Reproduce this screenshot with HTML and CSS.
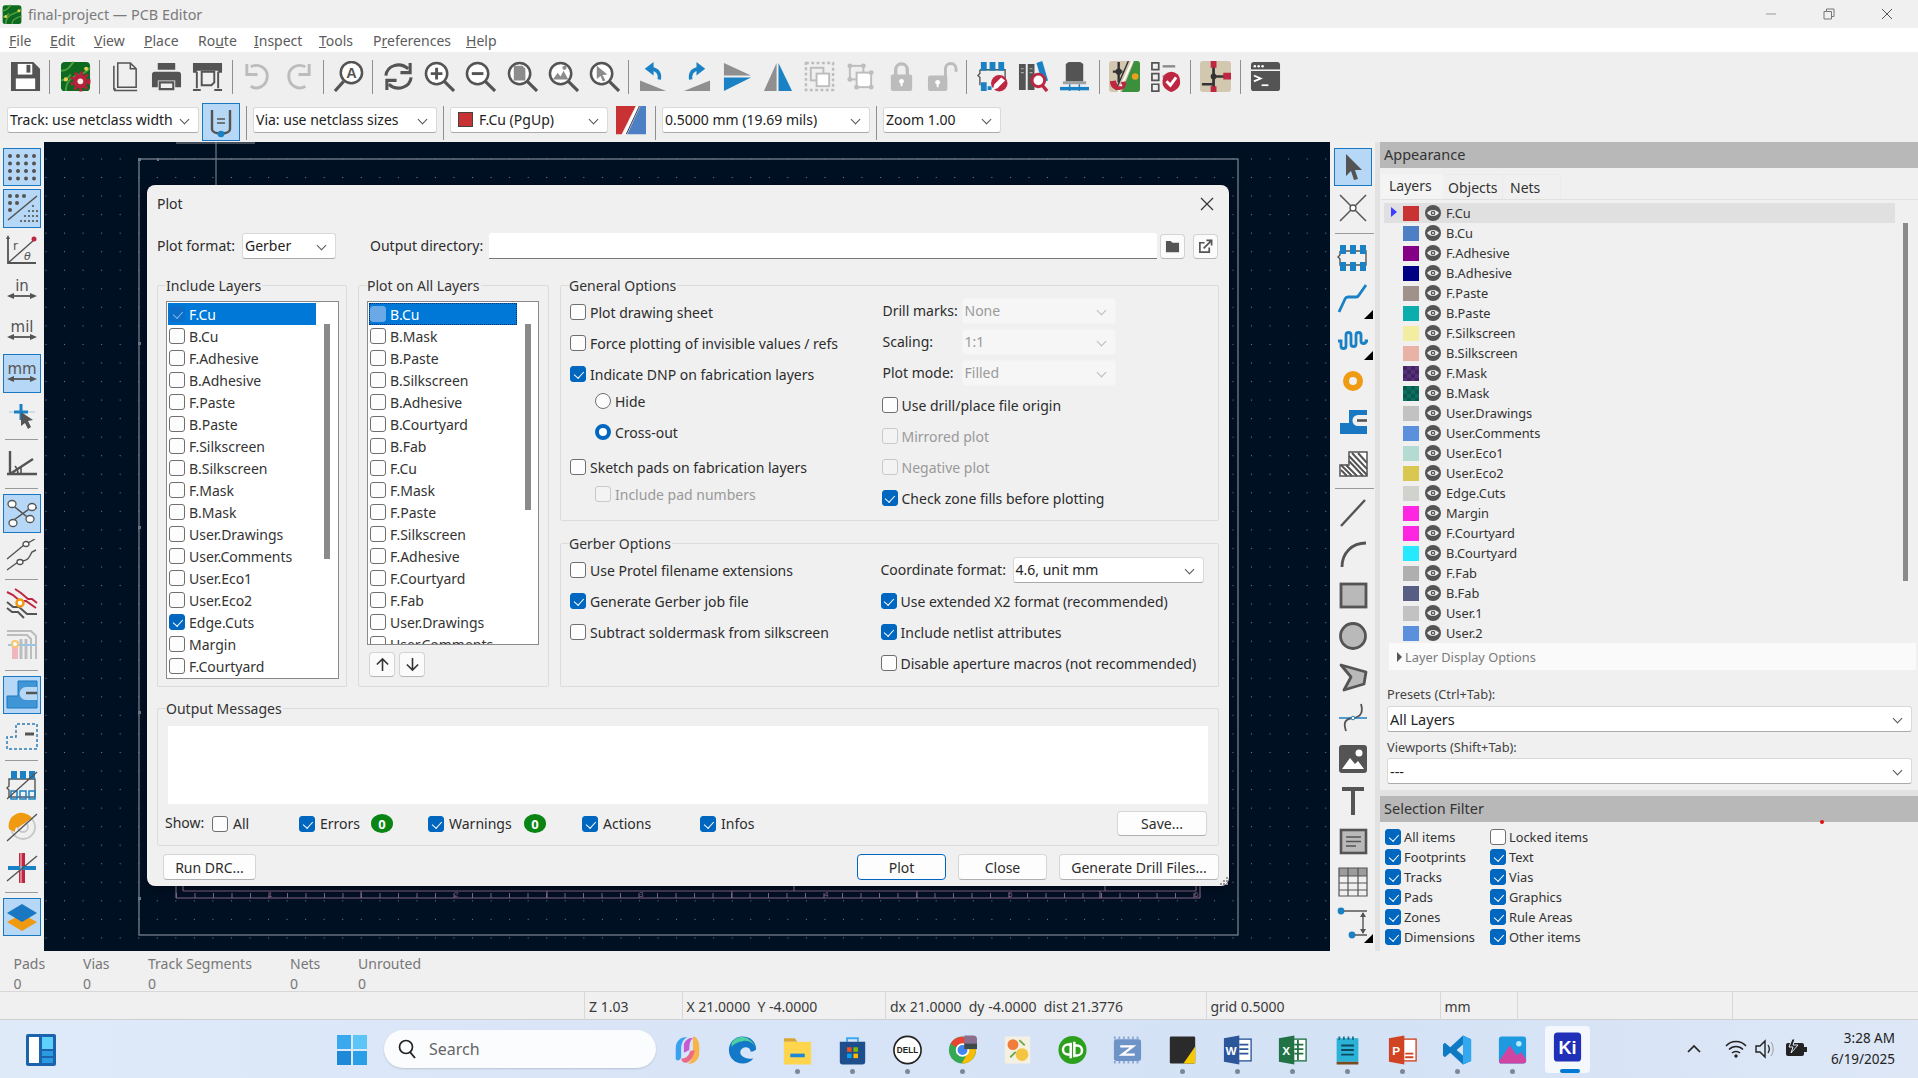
FILE: index.html
```html
<!DOCTYPE html>
<html lang="en">
<head>
<meta charset="utf-8">
<title>final-project — PCB Editor</title>
<link rel="stylesheet" href="styles.css">
</head>
<body>
<svg class="sprite" aria-hidden="true"><defs>
<symbol id="save" viewBox="0 0 32 32"><path fill="#545454" d="M1 1h23l7 7v23H1z"/><path fill="#fff" d="M8 3h15v11H8z"/><path fill="#545454" d="M17 4h4v8h-4z"/><path fill="#fff" d="M6 18h20v11H6z"/></symbol>
<symbol id="bsetup" viewBox="0 0 32 32"><rect x="1" y="1" width="30" height="30" rx="4" fill="#0d6a20"/><path d="M1 10c8 0 9-5 13-9M6 31c0-9 4-14 14-17s9-6 11-7M1 20c6 0 8-3 10-6" fill="none" stroke="#4e9f3d" stroke-width="2"/><circle cx="6" cy="19" r="2.200" fill="#e8cf52"/><circle cx="27" cy="8" r="2" fill="#e8cf52"/><circle cx="21" cy="21" r="9" fill="none" stroke="#b81f3c" stroke-width="3" stroke-dasharray="3 3"/><circle cx="21" cy="21" r="7.500" fill="#b81f3c"/><circle cx="21" cy="21" r="3" fill="#f4efe0"/></symbol>
<symbol id="page" viewBox="0 0 32 32"><path fill="none" stroke="#545454" stroke-width="1.600" d="M8 2h13l6 6v19H8zM21 2v6h6M4 5v24h2M4 30.500h24"/></symbol>
<symbol id="print" viewBox="0 0 32 32"><path fill="#545454" d="M7 2h18v7H7zM4 11h24a3 3 0 0 1 3 3v13h-6v-7H7v7H1V14a3 3 0 0 1 3-3z"/><path fill="none" stroke="#545454" stroke-width="2.200" d="M9 22h14v7H9z"/></symbol>
<symbol id="plot" viewBox="0 0 32 32"><path fill="#545454" d="M1 2h30v10h-4v-2H5v2H1z"/><path fill="none" stroke="#545454" stroke-width="2" d="M5 11v17M27 11v17M1 30h8M23 30h8M10 11h13v11l-3 3H10z"/></symbol>
<symbol id="undo" viewBox="0 0 32 32"><path d="M9 6c8-4 18 1 17 11s-11 13-17 9" fill="none" stroke="#bcbcbc" stroke-width="3"/><path d="M5 3v11h11" fill="none" stroke="#bcbcbc" stroke-width="3"/></symbol>
<symbol id="redo" viewBox="0 0 32 32"><path d="M23 6C15 2 5 7 6 17s11 13 17 9" fill="none" stroke="#bcbcbc" stroke-width="3"/><path d="M27 3v11H16" fill="none" stroke="#bcbcbc" stroke-width="3"/></symbol>
<symbol id="find" viewBox="0 0 32 32"><circle cx="19" cy="12" r="11" fill="#fff" stroke="#545454" stroke-width="2.600"/><path d="M11 21L2 31" stroke="#545454" stroke-width="3.200"/><text x="19" y="18" class="svgb" font-size="15" text-anchor="middle" fill="#545454">A</text></symbol>
<symbol id="refresh" viewBox="0 0 32 32"><path d="M3 15C4 5 17 0 26 8M29 17c-1 10-14 15-23 7" fill="none" stroke="#545454" stroke-width="3.200"/><path d="M28 2v10H18M4 30V20h10" fill="none" stroke="#545454" stroke-width="3.200"/></symbol>
<symbol id="mag" viewBox="0 0 32 32"><circle cx="13" cy="13" r="11" fill="#fff" stroke="#545454" stroke-width="2.600"/><path d="M21 21l10 10" stroke="#545454" stroke-width="3.200"/></symbol>
<symbol id="zin" viewBox="0 0 32 32"><use href="#mag"/><path d="M7 13h12M13 7v12" stroke="#545454" stroke-width="3"/></symbol>
<symbol id="zout" viewBox="0 0 32 32"><use href="#mag"/><path d="M7 13h12" stroke="#545454" stroke-width="3"/></symbol>
<symbol id="zfit" viewBox="0 0 32 32"><use href="#mag"/><path fill="#8c8c8c" d="M7 5h9l3 3v12H7z"/></symbol>
<symbol id="zobj" viewBox="0 0 32 32"><use href="#mag"/><path fill="#8c8c8c" d="M5 19l5-7 3 4 3-6 5 9z"/><circle cx="17" cy="7" r="2.200" fill="#8c8c8c"/></symbol>
<symbol id="zsel" viewBox="0 0 32 32"><use href="#mag"/><path fill="#8c8c8c" d="M8 5l11 9-5 .5 3 5.500-3 1-2-5.500-4 3z"/></symbol>
<symbol id="rccw" viewBox="0 0 32 32"><path fill="#8f8f8f" d="M1 31V20L28 31z"/><path d="M21 19c1-7-2-10-8-11" fill="none" stroke="#1a81c4" stroke-width="3.500"/><path fill="#1a81c4" d="M15 1v14L6 8z"/></symbol>
<symbol id="rcw" viewBox="0 0 32 32"><path fill="#8f8f8f" d="M31 31V20L4 31z"/><path d="M11 19c-1-7 2-10 8-11" fill="none" stroke="#1a81c4" stroke-width="3.500"/><path fill="#1a81c4" d="M17 1v14l9-7z"/></symbol>
<symbol id="flip" viewBox="0 0 32 32"><path fill="#8f8f8f" d="M3 2l28 13H3z"/><path fill="#1a81c4" d="M3 17h28L3 31z"/></symbol>
<symbol id="mirror" viewBox="0 0 32 32"><path fill="#8f8f8f" d="M15 2v29H2z"/><path fill="#1a81c4" d="M17 2v29h14z"/></symbol>
<symbol id="group" viewBox="0 0 32 32"><rect x="2" y="2" width="28" height="28" fill="none" stroke="#bdbdbd" stroke-width="2.500" stroke-dasharray="3 2.500"/><rect x="7" y="7" width="13" height="13" fill="none" stroke="#bdbdbd" stroke-width="2"/><rect x="13" y="13" width="13" height="13" fill="#fff" stroke="#bdbdbd" stroke-width="2"/></symbol>
<symbol id="ungroup" viewBox="0 0 32 32"><rect x="5" y="5" width="14" height="14" fill="none" stroke="#bdbdbd" stroke-width="2"/><rect x="12" y="12" width="15" height="15" fill="#fff" stroke="#bdbdbd" stroke-width="2"/><g fill="#bdbdbd"><circle cx="5" cy="5" r="2.500"/><circle cx="19" cy="5" r="2.500"/><circle cx="5" cy="19" r="2.500"/><circle cx="27" cy="12" r="2.500"/><circle cx="12" cy="27" r="2.500"/><circle cx="27" cy="27" r="2.500"/></g></symbol>
<symbol id="lock" viewBox="0 0 32 32"><path d="M10 15V9a6 6 0 0 1 12 0v6" fill="none" stroke="#bcbcbc" stroke-width="3.500"/><rect x="5" y="14" width="22" height="17" rx="2" fill="#bcbcbc"/><circle cx="16" cy="21" r="2.500" fill="#fff"/><path d="M15 21h2v5h-2z" fill="#fff"/></symbol>
<symbol id="unlock" viewBox="0 0 32 32"><path d="M19 16V8a5.500 5.500 0 0 1 11 0v3" fill="none" stroke="#bcbcbc" stroke-width="3"/><rect x="1" y="15" width="20" height="16" rx="2" fill="#bcbcbc"/><circle cx="11" cy="22" r="2.500" fill="#fff"/><path d="M10 22h2v5h-2z" fill="#fff"/></symbol>
<symbol id="fp" viewBox="0 0 32 32"><path d="M3 9h26v6M3 9v4l-2 2 2 2v6h26v-8" fill="none" stroke="#545454" stroke-width="1.400"/><g fill="#1a81c4"><path d="M3 3h6v9H3zM13 3h6v9h-6zM23 3h6v9h-6zM3 20h6v9H3zM13 20h6v9h-6zM23 20h6v9h-6z"/></g></symbol>
<symbol id="netedit" viewBox="0 0 32 32"><path d="M3 9h26v10M3 9v4l-2 2 2 2v8" fill="none" stroke="#545454" stroke-width="1.400"/><g fill="#1a81c4"><path d="M4 1h6v9H4zM13 1h6v9h-6zM22 1h6v9h-6zM4 22h6v9H4zM11 26h4v4h-4z"/></g><circle cx="23" cy="23" r="8.500" fill="#bf2641"/><path d="M16 30l2-6 7-7 4 3-8 8z" fill="#fff"/></symbol>
<symbol id="lib" viewBox="0 0 32 32"><path fill="#545454" d="M1 3h7v27H1zM10 3h7v27h-7z"/><path fill="#1a81c4" d="M19 2l6-2 6 20-6 2z"/><g stroke="#aaa" stroke-width="1.200"><path d="M3 8h3M3 12h3M12 8h3M12 12h3"/></g><circle cx="21" cy="20" r="6.500" fill="#fff" stroke="#bf2641" stroke-width="3"/><path d="M25 25l5 6" stroke="#bf2641" stroke-width="3.500"/></symbol>
<symbol id="d3" viewBox="0 0 32 32"><path fill="#545454" d="M7 3l3-2h12l3 2v18H7z"/><path fill="#545454" d="M4 21h24v3H4z" opacity=".5"/><path stroke="#1a81c4" stroke-width="3.500" d="M1 28.500h30"/><path stroke="#1a81c4" stroke-width="1.500" d="M11 24v7M21 24v7"/></symbol>
<symbol id="drc" viewBox="0 0 32 32"><rect x="0" y="0" width="32" height="32" rx="3" fill="#d2c8b0"/><path d="M26 0h3a3 3 0 0 1 3 3v26a3 3 0 0 1-3 3H13z" fill="#3b8f3d"/><path d="M24 0L10 32" stroke="#fff" stroke-width="2"/><path d="M20 0L7 30" stroke="#333" stroke-width="1.500"/><path d="M10 1v21M4 11h10" stroke="#333" stroke-width="2.500"/><circle cx="10" cy="11" r="3.200" fill="#333"/><circle cx="27" cy="16" r="3.400" fill="#eaa21d"/><path d="M1 21c0 5 3 9 9 9s9-5 7-9l-5 1 2 4-5 0-2-6z" fill="#bf2641"/></symbol>
<symbol id="check" viewBox="0 0 32 32"><path fill="none" stroke="#545454" stroke-width="1.800" d="M2 2h7v7H2zM2 13h7v7H2zM2 24h7v7H2z"/><path d="M13 5.500h13" stroke="#8c8c8c" stroke-width="2.500"/><path d="M13 16h5" stroke="#8c8c8c" stroke-width="2.500"/><path fill="#bf2641" d="M22 11a9 9 0 0 1 9 9v3c0 4-5 8-9 9-4-1-9-5-9-9v-3a9 9 0 0 1 9-9z"/><path d="M17 21l4 4 6-8" fill="none" stroke="#fff" stroke-width="3"/></symbol>
<symbol id="sch" viewBox="0 0 32 32"><rect width="32" height="32" rx="3" fill="#d2c8b0"/><path d="M14 3v26M14 16h14M2 24h12" stroke="#333" stroke-width="2.800"/><circle cx="14" cy="16" r="3" fill="#333"/><g fill="#bf2641"><path d="M11 0h6v7h-6zM24 12h8v7h-8zM11 26h6v6h-6z"/></g></symbol>
<symbol id="console" viewBox="0 0 32 32"><rect x="1" y="1" width="30" height="30" rx="3" fill="#545454"/><path d="M1 9.500h30" stroke="#fff" stroke-width="1.500"/><g fill="#fff"><circle cx="5" cy="5.500" r="1.300"/><circle cx="9" cy="5.500" r="1.300"/><circle cx="13" cy="5.500" r="1.300"/></g><path d="M4 15l7 3-7 3" fill="none" stroke="#fff" stroke-width="1.800"/><path d="M12 25h7" stroke="#fff" stroke-width="1.800"/></symbol>
<symbol id="posture" viewBox="0 0 32 32"><path d="M7 4v19c0 6 18 6 18 0V4" fill="none" stroke="#545454" stroke-width="2.400"/><path d="M12 13h8M12 17h8" stroke="#545454" stroke-width="1.600"/><circle cx="16" cy="28" r="3.300" fill="#1a81c4"/></symbol>
<symbol id="layerpair" viewBox="0 0 32 32"><path fill="#c83232" d="M0 0h21L6 30H0z"/><path fill="#4d7fc4" d="M26 0h6v30H12z"/><path d="M23 0L9 30" stroke="#fff" stroke-width="2"/><path d="M25 0L11 30" stroke="#333" stroke-width="1"/></symbol>
<symbol id="gridon" viewBox="0 0 32 32"><g fill="#545454"><circle cx="4" cy="5" r="2"/><circle cx="12" cy="5" r="2"/><circle cx="20" cy="5" r="2"/><circle cx="28" cy="5" r="2"/><circle cx="4" cy="12.500" r="2"/><circle cx="12" cy="12.500" r="2"/><circle cx="20" cy="12.500" r="2"/><circle cx="28" cy="12.500" r="2"/><circle cx="4" cy="20" r="2"/><circle cx="12" cy="20" r="2"/><circle cx="20" cy="20" r="2"/><circle cx="28" cy="20" r="2"/><circle cx="4" cy="27.500" r="2"/><circle cx="12" cy="27.500" r="2"/><circle cx="20" cy="27.500" r="2"/><circle cx="28" cy="27.500" r="2"/></g></symbol>
<symbol id="gridoff" viewBox="0 0 32 32"><g fill="#545454"><circle cx="4" cy="4" r="2"/><circle cx="11" cy="4" r="2"/><circle cx="18" cy="4" r="2"/><circle cx="4" cy="11" r="2"/><circle cx="11" cy="11" r="2"/><circle cx="4" cy="18" r="2"/></g><path d="M2 28L31 4" stroke="#545454" stroke-width="1.600"/><g fill="#545454"><circle cx="27" cy="14" r="1.100"/><circle cx="23" cy="19" r="1.100"/><circle cx="27" cy="19" r="1.100"/><circle cx="31" cy="19" r="1.100"/><circle cx="19" cy="24" r="1.100"/><circle cx="23" cy="24" r="1.100"/><circle cx="27" cy="24" r="1.100"/><circle cx="31" cy="24" r="1.100"/><circle cx="15" cy="29" r="1.100"/><circle cx="19" cy="29" r="1.100"/><circle cx="23" cy="29" r="1.100"/><circle cx="27" cy="29" r="1.100"/><circle cx="31" cy="29" r="1.100"/></g></symbol>
<symbol id="polar" viewBox="0 0 32 32"><path d="M2 3v26h28" fill="none" stroke="#545454" stroke-width="1.800"/><path d="M2 29L28 6" stroke="#545454" stroke-width="1.400"/><path d="M2 1l-2 4h4z" fill="#545454"/><circle cx="28" cy="5" r="2.500" fill="#bf2641"/><text x="7" y="16" class="svgs" font-size="12" fill="#545454">r</text><text x="18" y="26" class="svgs" font-size="11" font-style="italic" fill="#545454">θ</text></symbol>
<symbol id="u-in" viewBox="0 0 32 32"><text x="16" y="16" class="svgs" font-size="15" text-anchor="middle" fill="#545454">in</text><path d="M3 21h26" stroke="#545454" stroke-width="1.800"/><path d="M1 21l7-3v6zM31 21l-7-3v6z" fill="#545454"/></symbol>
<symbol id="u-mil" viewBox="0 0 32 32"><text x="16" y="16" class="svgs" font-size="15" text-anchor="middle" fill="#545454">mil</text><path d="M3 21h26" stroke="#545454" stroke-width="1.800"/><path d="M1 21l7-3v6zM31 21l-7-3v6z" fill="#545454"/></symbol>
<symbol id="u-mm" viewBox="0 0 32 32"><text x="16" y="16" class="svgs" font-size="15" text-anchor="middle" fill="#545454">mm</text><path d="M3 21h26" stroke="#545454" stroke-width="1.800"/><path d="M1 21l7-3v6zM31 21l-7-3v6z" fill="#545454"/></symbol>
<symbol id="cursor" viewBox="0 0 32 32"><path d="M3 13h26" stroke="#aac8e0" stroke-width="1"/><path d="M8 13h14M15 5v16" stroke="#1a81c4" stroke-width="3"/><path fill="#545454" d="M15 13l12 8-5 1 3 6-3 2-3-6-4 3z"/></symbol>
<symbol id="angle" viewBox="0 0 32 32"><path d="M4 3v24M1 26h30M4 26L27 11" fill="none" stroke="#545454" stroke-width="2.400"/><path d="M12 26c0-3-1-6-3-8M15 19v7" fill="none" stroke="#545454" stroke-width="1.600"/></symbol>
<symbol id="rats" viewBox="0 0 32 32"><path d="M5 6l20 16M5 24L26 9M26 9l5 1" stroke="#545454" stroke-width="1.500"/><g fill="#fff" stroke="#545454" stroke-width="1.300"><ellipse cx="6" cy="6" rx="4" ry="3.500"/><ellipse cx="26" cy="9" rx="4" ry="3.500"/><ellipse cx="24" cy="21" rx="4" ry="3.500"/><ellipse cx="7" cy="25" rx="4" ry="3.500"/></g></symbol>
<symbol id="curved" viewBox="0 0 32 32"><path d="M1 20L18 6M22 4l7-4M1 31L12 23M16 22c7 0 8-6 10-9l4-2" fill="none" stroke="#545454" stroke-width="1.400"/><ellipse cx="20" cy="5" rx="3" ry="2.500" fill="#fff" stroke="#545454" stroke-width="1.300"/><ellipse cx="14" cy="23" rx="3" ry="2.500" fill="#fff" stroke="#545454" stroke-width="1.300"/></symbol>
<symbol id="clear" viewBox="0 0 32 32"><path d="M1 4l6 3 7 6 6 0 10 7" fill="none" stroke="#bf2641" stroke-width="2"/><path d="M9 1l6 4 7 6h4l5 4" fill="none" stroke="#bf2641" stroke-width="2"/><path d="M1 14l6 5h6l8 7h10M1 20l5 4h6l6 6" fill="none" stroke="#545454" stroke-width="2"/><circle cx="14" cy="15" r="3.500" fill="#fff" stroke="#f09a12" stroke-width="2.500"/></symbol>
<symbol id="clear2" viewBox="0 0 32 32"><path d="M1 6h20l4 4v20M1 2h24l5 5v23" fill="none" stroke="#bdbdbd" stroke-width="2"/><path d="M15 10v20M20 10v20" stroke="#bdbdbd" stroke-width="3"/><path d="M2 16h28" stroke="#9cc5e3" stroke-width="2"/><path d="M6 18h6v12H6z" fill="#edb7bc"/><circle cx="9" cy="15" r="3" fill="#fff" stroke="#f5c671" stroke-width="2"/></symbol>
<symbol id="padf" viewBox="0 0 32 32"><path fill="#3f95d6" stroke="#1a78c2" stroke-width="1" d="M1 29V17h11V2h19v27z"/><path d="M31 8H20a6 6 0 0 0 0 13h11" fill="#b6d7f5"/><path d="M20 14h11" stroke="#545454" stroke-width="2.500"/></symbol>
<symbol id="pads" viewBox="0 0 32 32"><path fill="none" stroke="#2b7cb8" stroke-width="1.500" stroke-dasharray="3 2" d="M1 29V17h9V4h21v25z"/><path d="M19 14h9" stroke="#545454" stroke-width="3"/></symbol>
<symbol id="fpo" viewBox="0 0 32 32"><path d="M3 10h26v18H3v-7l-2-2 2-2z" fill="none" stroke="#545454" stroke-width="1.400"/><g fill="#1a81c4"><path d="M5 2h6v8H5zM14 2h6v8h-6zM23 2h6v8h-6z"/></g><g fill="none" stroke="#1a81c4" stroke-width="1.500"><path d="M5 22h6v8H5zM14 22h6v8h-6zM23 22h6v8h-6z"/></g><path d="M1 30L31 3" stroke="#545454" stroke-width="1.400"/></symbol>
<symbol id="viao" viewBox="0 0 32 32"><circle cx="17" cy="16" r="12" fill="none" stroke="#c7c7c7" stroke-width="1.800"/><circle cx="17" cy="16" r="5" fill="none" stroke="#c7c7c7" stroke-width="1.800"/><path d="M3 18a13 13 0 0 1 23-11L13 16c-4 0-4 3-4 5z" fill="#f09a12"/><path d="M1 30L31 3" stroke="#545454" stroke-width="1.400"/></symbol>
<symbol id="trko" viewBox="0 0 32 32"><path fill="#bf2641" d="M13 1h6v30h-6z"/><path d="M2 16h28" stroke="#1a81c4" stroke-width="4"/><path d="M15 1v30" stroke="#f2bcc4" stroke-width="1.200"/><path d="M1 29L31 4" stroke="#545454" stroke-width="1.400"/></symbol>
<symbol id="layers" viewBox="0 0 32 32"><path fill="#f09a12" d="M16 13l15 8-15 9-15-9z"/><path fill="#1a78c2" d="M16 3l15 9-15 9-15-9z"/></symbol>
<symbol id="arrow" viewBox="0 0 32 32"><path fill="#545454" d="M9 3l16 16-7 0 3 9-4 1-3-9-5 5z"/></symbol>
<symbol id="xsel" viewBox="0 0 32 32"><path d="M3 3l26 26M29 3L3 29" stroke="#545454" stroke-width="1.500"/><circle cx="16" cy="16" r="3" fill="#fff" stroke="#545454" stroke-width="1.300"/></symbol>
<symbol id="route" viewBox="0 0 32 32"><path d="M2 29l6-13q1-2 3-2h8q2 0 3-2l7-10" fill="none" stroke="#1a81c4" stroke-width="2.800"/></symbol>
<symbol id="tune" viewBox="0 0 32 32"><path d="M1 17h3v5a2.500 2.500 0 0 0 5 0V11a2.500 2.500 0 0 1 5 0v9a2.500 2.500 0 0 0 5 0V11a2.500 2.500 0 0 1 5 0v6a2.500 2.500 0 0 0 5 0h2" fill="none" stroke="#1a81c4" stroke-width="2.800"/></symbol>
<symbol id="via" viewBox="0 0 32 32"><circle cx="16" cy="16" r="7" fill="none" stroke="#f09a12" stroke-width="6"/></symbol>
<symbol id="padb" viewBox="0 0 32 32"><path fill="#1a78c2" d="M3 28V17h9V4h18v24z"/><path d="M30 9H21a5.500 5.500 0 0 0 0 11h9z" fill="#f0f0f0"/><path d="M20 14.500h10" stroke="#545454" stroke-width="2.600"/></symbol>
<symbol id="zone" viewBox="0 0 32 32"><path d="M3 29V18h9V5h18v24z" fill="#fff" stroke="#545454" stroke-width="1.500"/><path d="M4 23l6 6M4 18l11 11M9 18l11 11M12 14l14 15M12 9l18 19M15 6l15 16M21 6l9 10" stroke="#545454" stroke-width="2"/></symbol>
<symbol id="line" viewBox="0 0 32 32"><path d="M4 29L28 3" stroke="#545454" stroke-width="2.400"/></symbol>
<symbol id="arc" viewBox="0 0 32 32"><path d="M5 29c0-14 10-24 24-24" fill="none" stroke="#545454" stroke-width="2.800"/></symbol>
<symbol id="rect" viewBox="0 0 32 32"><rect x="4" y="5" width="25" height="23" fill="#b9b9b9" stroke="#545454" stroke-width="2.800"/></symbol>
<symbol id="circ" viewBox="0 0 32 32"><circle cx="16" cy="16" r="12.500" fill="#b9b9b9" stroke="#545454" stroke-width="2.800"/></symbol>
<symbol id="poly" viewBox="0 0 32 32"><path d="M4 4l25 7-2 12-20 6 7-13z" fill="#b9b9b9" stroke="#545454" stroke-width="2.800" stroke-linejoin="round"/></symbol>
<symbol id="bez" viewBox="0 0 32 32"><path d="M2 16h28" stroke="#1a81c4" stroke-width="1.500"/><path d="M9 29c-2-6-3-12 7-13 9-1 10-7 8-14" fill="none" stroke="#545454" stroke-width="1.800"/><circle cx="16" cy="16" r="1.800" fill="#fff" stroke="#1a81c4"/></symbol>
<symbol id="image" viewBox="0 0 32 32"><rect x="2" y="2" width="28" height="28" rx="3" fill="#545454"/><path fill="#fff" d="M5 26l8-11 5 6 3-3 6 8z"/><circle cx="22" cy="10" r="3.500" fill="#fff"/></symbol>
<symbol id="T" viewBox="0 0 32 32"><path fill="#545454" d="M5 3h22v4H18v24h-4V7H5z"/></symbol>
<symbol id="tbox" viewBox="0 0 32 32"><rect x="4" y="5" width="25" height="23" fill="#b9b9b9" stroke="#545454" stroke-width="2.600"/><path d="M9 12h15M9 16.500h15M9 21h10" stroke="#545454" stroke-width="1.500"/></symbol>
<symbol id="table" viewBox="0 0 32 32"><path fill="#9c9c9c" d="M2 2h28v8H2z"/><path d="M2 2h28v28H2zM2 10h28M2 17h28M2 24h28M11 2v28M21 2v28" fill="none" stroke="#545454" stroke-width="1.200"/></symbol>
<symbol id="dim" viewBox="0 0 32 32"><circle cx="4" cy="4" r="3.400" fill="#1a81c4"/><circle cx="15" cy="28" r="3.400" fill="#1a81c4"/><path d="M7 4h23M18 28h12M26 6v20" stroke="#545454" stroke-width="1.400"/><path d="M26 5l-3 5h6zM26 27l-3-5h6z" fill="#545454"/></symbol>
<symbol id="eye" viewBox="0 0 16 16"><circle cx="8" cy="8" r="8" fill="#545454"/><path d="M2 8c3-4 9-4 12 0-3 4-9 4-12 0z" fill="#eee"/><circle cx="8" cy="8" r="2.300" fill="#545454"/><circle cx="8" cy="8" r="1" fill="#eee"/></symbol>
<symbol id="folder" viewBox="0 0 16 16"><path fill="#545454" d="M1 2h5l2 2h7v10H1z"/></symbol>
<symbol id="ext" viewBox="0 0 16 16"><path d="M12 9v5H2V4h5" fill="none" stroke="#545454" stroke-width="1.800"/><path d="M6 10L14 2M9 1.500h5.500V7" fill="none" stroke="#545454" stroke-width="1.800"/></symbol>
<symbol id="up" viewBox="0 0 16 16"><path d="M8 15V2M2 8l6-6 6 6" fill="none" stroke="#333" stroke-width="1.700"/></symbol>
<symbol id="down" viewBox="0 0 16 16"><path d="M8 1v13M2 8l6 6 6-6" fill="none" stroke="#333" stroke-width="1.700"/></symbol>
</defs></svg>

<div class="app">
  <header class="titlebar">
    <svg class="appicon" viewBox="0 0 32 32"><rect x="1" y="1" width="30" height="30" rx="4" fill="#0d6a20"/><path d="M1 10c8 0 9-5 13-9M6 31c0-9 4-14 14-17s9-6 11-7M1 20c6 0 8-3 10-6M16 31c0-6 6-10 15-12" fill="none" stroke="#4e9f3d" stroke-width="2.400"/><circle cx="6" cy="19" r="2.400" fill="#e8cf52"/><circle cx="27" cy="10" r="2.400" fill="#e8cf52"/></svg>
    <span class="apptitle">final-project — PCB Editor</span>
    <div class="winctl">
      <svg class="wc" viewBox="0 0 12 12"><path d="M1 6h10" stroke="#999" stroke-width="1"/></svg>
      <svg class="wc" viewBox="0 0 12 12"><path d="M1 3.500h7.500V11H1zM3.500 3.500V1H11v7.500H8.500" fill="none" stroke="#777" stroke-width="1"/></svg>
      <svg class="wc" viewBox="0 0 12 12"><path d="M1 1l10 10M11 1L1 11" stroke="#555" stroke-width="1"/></svg>
    </div>
  </header>
  <nav class="menubar">
    <span><u>F</u>ile</span><span><u>E</u>dit</span><span><u>V</u>iew</span><span><u>P</u>lace</span><span>Ro<u>u</u>te</span><span><u>I</u>nspect</span><span><u>T</u>ools</span><span>P<u>r</u>eferences</span><span><u>H</u>elp</span>
  </nav>
  <div class="tool1">
    <span class="tb"><svg><use href="#save"/></svg></span><i class="hsep"></i>
    <span class="tb"><svg><use href="#bsetup"/></svg></span><i class="hsep"></i>
    <span class="tb"><svg><use href="#page"/></svg></span><span class="tb"><svg><use href="#print"/></svg></span><span class="tb"><svg><use href="#plot"/></svg></span><i class="hsep"></i>
    <span class="tb"><svg><use href="#undo"/></svg></span><span class="tb"><svg><use href="#redo"/></svg></span><i class="hsep"></i>
    <span class="tb"><svg><use href="#find"/></svg></span><i class="hsep"></i>
    <span class="tb"><svg><use href="#refresh"/></svg></span><span class="tb"><svg><use href="#zin"/></svg></span><span class="tb"><svg><use href="#zout"/></svg></span><span class="tb"><svg><use href="#zfit"/></svg></span><span class="tb"><svg><use href="#zobj"/></svg></span><span class="tb"><svg><use href="#zsel"/></svg></span><i class="hsep"></i>
    <span class="tb"><svg><use href="#rccw"/></svg></span><span class="tb"><svg><use href="#rcw"/></svg></span><span class="tb"><svg><use href="#flip"/></svg></span><span class="tb"><svg><use href="#mirror"/></svg></span><span class="tb"><svg><use href="#group"/></svg></span><span class="tb"><svg><use href="#ungroup"/></svg></span><span class="tb"><svg><use href="#lock"/></svg></span><span class="tb"><svg><use href="#unlock"/></svg></span><i class="hsep"></i>
    <span class="tb"><svg><use href="#netedit"/></svg></span><span class="tb"><svg><use href="#lib"/></svg></span><span class="tb"><svg><use href="#d3"/></svg></span><i class="hsep"></i>
    <span class="tb"><svg><use href="#drc"/></svg></span><span class="tb"><svg><use href="#check"/></svg></span><i class="hsep"></i>
    <span class="tb"><svg><use href="#sch"/></svg></span><i class="hsep"></i>
    <span class="tb"><svg><use href="#console"/></svg></span>
  </div>
  <div class="tool2">
    <div class="sel w-track">Track: use netclass width</div>
    <span class="posture"><svg><use href="#posture"/></svg></span>
    <i class="hsep2"></i>
    <div class="sel w-via">Via: use netclass sizes</div>
    <i class="hsep2"></i>
    <div class="sel w-layer"><b class="swatch-red"></b>F.Cu (PgUp)</div>
    <svg class="pair"><use href="#layerpair"/></svg>
    <i class="hsep2 after-pair"></i>
    <div class="sel w-grid">0.5000 mm (19.69 mils)</div>
    <i class="hsep2"></i>
    <div class="sel w-zoom">Zoom 1.00</div>
  </div>

  <div class="main">
    <aside class="vt vl">
      <span class="vb on"><svg><use href="#gridon"/></svg></span>
      <span class="vb on"><svg><use href="#gridoff"/></svg></span>
      <span class="vb"><svg><use href="#polar"/></svg></span>
      <span class="vb"><svg><use href="#u-in"/></svg></span>
      <span class="vb"><svg><use href="#u-mil"/></svg></span>
      <span class="vb on"><svg><use href="#u-mm"/></svg></span>
      <span class="vb"><svg><use href="#cursor"/></svg></span>
      <i class="vsep"></i>
      <span class="vb"><svg><use href="#angle"/></svg></span>
      <i class="vsep"></i>
      <span class="vb on"><svg><use href="#rats"/></svg></span>
      <span class="vb"><svg><use href="#curved"/></svg></span>
      <i class="vsep"></i>
      <span class="vb"><svg><use href="#clear"/></svg></span>
      <span class="vb"><svg><use href="#clear2"/></svg></span>
      <i class="vsep"></i>
      <span class="vb on"><svg><use href="#padf"/></svg></span>
      <span class="vb"><svg><use href="#pads"/></svg></span>
      <i class="vsep"></i>
      <span class="vb"><svg><use href="#fpo"/></svg></span>
      <span class="vb"><svg><use href="#viao"/></svg></span>
      <span class="vb"><svg><use href="#trko"/></svg></span>
      <i class="vsep"></i>
      <span class="vb on"><svg><use href="#layers"/></svg></span>
    </aside>

    <section class="canvas">
      <svg class="sheet" viewBox="0 0 1286 809">
        <path class="tabline" d="M132 1h79M172 0v43"/>
        <rect class="outer" x="95" y="17" width="1099" height="776"/>
        <g class="corner"><rect x="94" y="16" width="3" height="3"/><rect x="94" y="200" width="3" height="3"/><rect x="94" y="384" width="3" height="3"/><rect x="94" y="569" width="3" height="3"/><rect x="94" y="755" width="3" height="3"/><rect x="113" y="16" width="2" height="3"/></g>
        <path class="frame" d="M132 756h1024M139 749h1013M139 744v5M750 744v5M1061 744v5M1152 744v5M132 744v12M1156 744v12M317 749v7M503 749v7M688 749v7M873 749v7M1056 749v7"/>
        <path class="ticks" d="M132 753.500h1024"/>
        <g class="numbers"><text x="224" y="755">1</text><text x="410" y="755">2</text><text x="595" y="755">3</text><text x="780" y="755">4</text><text x="964" y="755">5</text><text x="1150" y="755">6</text></g>
      </svg>
      <div class="dialog">
        <div class="dlg-title"><span>Plot</span><svg class="dlg-x" viewBox="0 0 14 14"><path d="M1 1l12 12M13 1L1 13" stroke="#333" stroke-width="1.200"/></svg></div>
        <div class="fmt-row">
          <span class="lab w-plotfmt">Plot format:</span>
          <div class="sel w-gerber">Gerber</div>
          <span class="lab w-outdir">Output directory:</span>
          <div class="txt-input"></div>
          <span class="ibtn first"><svg><use href="#folder"/></svg></span>
          <span class="ibtn"><svg><use href="#ext"/></svg></span>
        </div>
        <div class="cols">
          <div class="group g-inc"><span class="legend">Include Layers</span>
            <div class="list l-inc">
              <div class="rows">
                <div class="row sel-row"><span class="cb on dim"></span>F.Cu</div>
                <div class="row"><span class="cb"></span>B.Cu</div>
                <div class="row"><span class="cb"></span>F.Adhesive</div>
                <div class="row"><span class="cb"></span>B.Adhesive</div>
                <div class="row"><span class="cb"></span>F.Paste</div>
                <div class="row"><span class="cb"></span>B.Paste</div>
                <div class="row"><span class="cb"></span>F.Silkscreen</div>
                <div class="row"><span class="cb"></span>B.Silkscreen</div>
                <div class="row"><span class="cb"></span>F.Mask</div>
                <div class="row"><span class="cb"></span>B.Mask</div>
                <div class="row"><span class="cb"></span>User.Drawings</div>
                <div class="row"><span class="cb"></span>User.Comments</div>
                <div class="row"><span class="cb"></span>User.Eco1</div>
                <div class="row"><span class="cb"></span>User.Eco2</div>
                <div class="row"><span class="cb on"></span>Edge.Cuts</div>
                <div class="row"><span class="cb"></span>Margin</div>
                <div class="row"><span class="cb"></span>F.Courtyard</div>
              </div>
              <div class="thumb t-inc"></div>
            </div>
          </div>
          <div class="group g-all"><span class="legend">Plot on All Layers</span>
            <div class="list l-all">
              <div class="rows">
                <div class="row sel-row focus"><span class="cb pale"></span>B.Cu</div>
                <div class="row"><span class="cb"></span>B.Mask</div>
                <div class="row"><span class="cb"></span>B.Paste</div>
                <div class="row"><span class="cb"></span>B.Silkscreen</div>
                <div class="row"><span class="cb"></span>B.Adhesive</div>
                <div class="row"><span class="cb"></span>B.Courtyard</div>
                <div class="row"><span class="cb"></span>B.Fab</div>
                <div class="row"><span class="cb"></span>F.Cu</div>
                <div class="row"><span class="cb"></span>F.Mask</div>
                <div class="row"><span class="cb"></span>F.Paste</div>
                <div class="row"><span class="cb"></span>F.Silkscreen</div>
                <div class="row"><span class="cb"></span>F.Adhesive</div>
                <div class="row"><span class="cb"></span>F.Courtyard</div>
                <div class="row"><span class="cb"></span>F.Fab</div>
                <div class="row"><span class="cb"></span>User.Drawings</div>
                <div class="row"><span class="cb"></span>User.Comments</div>
              </div>
              <div class="thumb t-all"></div>
            </div>
            <div class="updown"><span class="ibtn"><svg><use href="#up"/></svg></span><span class="ibtn"><svg><use href="#down"/></svg></span></div>
          </div>
          <div class="rightcol">
            <div class="group g-gen"><span class="legend">General Options</span>
              <div class="gen-left">
                <label class="opt"><span class="cb"></span>Plot drawing sheet</label>
                <label class="opt g5"><span class="cb"></span>Force plotting of invisible values / refs</label>
                <label class="opt g5"><span class="cb on"></span>Indicate DNP on fabrication layers</label>
                <label class="opt g1 ind"><span class="rb"></span>Hide</label>
                <label class="opt g5 ind"><span class="rb on"></span>Cross-out</label>
                <label class="opt g9"><span class="cb"></span>Sketch pads on fabrication layers</label>
                <label class="opt g1 ind off"><span class="cb dis"></span>Include pad numbers</label>
              </div>
              <div class="gen-right">
                <div class="lsel"><span class="lab w-dm">Drill marks:</span><div class="sel w-dis dis">None</div></div>
                <div class="lsel g5"><span class="lab w-dm">Scaling:</span><div class="sel w-dis dis">1:1</div></div>
                <div class="lsel g5"><span class="lab w-dm">Plot mode:</span><div class="sel w-dis dis">Filled</div></div>
                <label class="opt g6"><span class="cb"></span>Use drill/place file origin</label>
                <label class="opt g5 off"><span class="cb dis"></span>Mirrored plot</label>
                <label class="opt g5 off"><span class="cb dis"></span>Negative plot</label>
                <label class="opt g5"><span class="cb on"></span>Check zone fills before plotting</label>
              </div>
            </div>
            <div class="group g-ger"><span class="legend">Gerber Options</span>
              <div class="gen-left">
                <label class="opt"><span class="cb"></span>Use Protel filename extensions</label>
                <label class="opt g5"><span class="cb on"></span>Generate Gerber job file</label>
                <label class="opt g5"><span class="cb"></span>Subtract soldermask from silkscreen</label>
              </div>
              <div class="ger-right">
                <div class="lsel"><span class="lab w-cf">Coordinate format:</span><div class="sel w-cfs">4.6, unit mm</div></div>
                <label class="opt g5"><span class="cb on"></span>Use extended X2 format (recommended)</label>
                <label class="opt g5"><span class="cb on"></span>Include netlist attributes</label>
                <label class="opt g5"><span class="cb"></span>Disable aperture macros (not recommended)</label>
              </div>
            </div>
          </div>
        </div>
        <div class="group g-out"><span class="legend">Output Messages</span>
          <div class="msgbox"></div>
          <div class="showrow">
            <span class="c-show">Show:</span>
            <label class="c-all"><span class="cb"></span>All</label>
            <label class="c-err"><span class="cb on"></span>Errors</label>
            <span class="c-bdg1"><b class="badge">0</b></span>
            <label class="c-war"><span class="cb on"></span>Warnings</label>
            <span class="c-bdg2"><b class="badge">0</b></span>
            <label class="c-act"><span class="cb on"></span>Actions</label>
            <label class="c-inf"><span class="cb on"></span>Infos</label>
            <button class="btn b-save">Save...</button>
          </div>
        </div>
        <div class="btnrow">
          <button class="btn b-drc">Run DRC...</button>
          <button class="btn b-plot">Plot</button>
          <button class="btn b-close">Close</button>
          <button class="btn b-drill">Generate Drill Files...</button>
        </div>
        <svg class="grip" viewBox="0 0 10 10"><g fill="#9a9a9a"><rect x="7" y="1" width="2" height="2"/><rect x="4" y="4" width="2" height="2"/><rect x="7" y="4" width="2" height="2"/><rect x="1" y="7" width="2" height="2"/><rect x="4" y="7" width="2" height="2"/><rect x="7" y="7" width="2" height="2"/></g></svg>
      </div>
    </section>

    <aside class="vt vr">
      <span class="vb on"><svg><use href="#arrow"/></svg></span>
      <span class="vb"><svg><use href="#xsel"/></svg></span>
      <i class="vsep"></i>
      <span class="vb"><svg><use href="#fp"/></svg></span>
      <span class="vb more"><svg><use href="#route"/></svg></span>
      <span class="vb more"><svg><use href="#tune"/></svg></span>
      <span class="vb"><svg><use href="#via"/></svg></span>
      <span class="vb"><svg><use href="#padb"/></svg></span>
      <span class="vb"><svg><use href="#zone"/></svg></span>
      <i class="vsep"></i>
      <span class="vb"><svg><use href="#line"/></svg></span>
      <span class="vb"><svg><use href="#arc"/></svg></span>
      <span class="vb"><svg><use href="#rect"/></svg></span>
      <span class="vb"><svg><use href="#circ"/></svg></span>
      <span class="vb"><svg><use href="#poly"/></svg></span>
      <span class="vb"><svg><use href="#bez"/></svg></span>
      <span class="vb"><svg><use href="#image"/></svg></span>
      <span class="vb"><svg><use href="#T"/></svg></span>
      <span class="vb"><svg><use href="#tbox"/></svg></span>
      <span class="vb"><svg><use href="#table"/></svg></span>
      <span class="vb more"><svg><use href="#dim"/></svg></span>
    </aside>

    <aside class="panel">
      <div class="phead">Appearance</div>
      <div class="tabs"><span class="tab active">Layers</span><span class="tab">Objects</span><span class="tab">Nets</span></div>
      <div class="layerwrap">
        <div class="layers">
          <div class="lr cur"><i class="arrow"></i><b class="sw c-fcu"></b><svg class="eye"><use href="#eye"/></svg>F.Cu</div>
          <div class="lr"><i></i><b class="sw c-bcu"></b><svg class="eye"><use href="#eye"/></svg>B.Cu</div>
          <div class="lr"><i></i><b class="sw c-fad"></b><svg class="eye"><use href="#eye"/></svg>F.Adhesive</div>
          <div class="lr"><i></i><b class="sw c-bad"></b><svg class="eye"><use href="#eye"/></svg>B.Adhesive</div>
          <div class="lr"><i></i><b class="sw c-fpa"></b><svg class="eye"><use href="#eye"/></svg>F.Paste</div>
          <div class="lr"><i></i><b class="sw c-bpa"></b><svg class="eye"><use href="#eye"/></svg>B.Paste</div>
          <div class="lr"><i></i><b class="sw c-fsi"></b><svg class="eye"><use href="#eye"/></svg>F.Silkscreen</div>
          <div class="lr"><i></i><b class="sw c-bsi"></b><svg class="eye"><use href="#eye"/></svg>B.Silkscreen</div>
          <div class="lr"><i></i><b class="sw c-fma"></b><svg class="eye"><use href="#eye"/></svg>F.Mask</div>
          <div class="lr"><i></i><b class="sw c-bma"></b><svg class="eye"><use href="#eye"/></svg>B.Mask</div>
          <div class="lr"><i></i><b class="sw c-udr"></b><svg class="eye"><use href="#eye"/></svg>User.Drawings</div>
          <div class="lr"><i></i><b class="sw c-uco"></b><svg class="eye"><use href="#eye"/></svg>User.Comments</div>
          <div class="lr"><i></i><b class="sw c-ue1"></b><svg class="eye"><use href="#eye"/></svg>User.Eco1</div>
          <div class="lr"><i></i><b class="sw c-ue2"></b><svg class="eye"><use href="#eye"/></svg>User.Eco2</div>
          <div class="lr"><i></i><b class="sw c-edg"></b><svg class="eye"><use href="#eye"/></svg>Edge.Cuts</div>
          <div class="lr"><i></i><b class="sw c-mar"></b><svg class="eye"><use href="#eye"/></svg>Margin</div>
          <div class="lr"><i></i><b class="sw c-mar"></b><svg class="eye"><use href="#eye"/></svg>F.Courtyard</div>
          <div class="lr"><i></i><b class="sw c-bcy"></b><svg class="eye"><use href="#eye"/></svg>B.Courtyard</div>
          <div class="lr"><i></i><b class="sw c-ffa"></b><svg class="eye"><use href="#eye"/></svg>F.Fab</div>
          <div class="lr"><i></i><b class="sw c-bfa"></b><svg class="eye"><use href="#eye"/></svg>B.Fab</div>
          <div class="lr"><i></i><b class="sw c-udr"></b><svg class="eye"><use href="#eye"/></svg>User.1</div>
          <div class="lr"><i></i><b class="sw c-uco"></b><svg class="eye"><use href="#eye"/></svg>User.2</div>
        </div>
        <div class="pthumb"></div>
      </div>
      <div class="ldo"><i class="ldo-arrow"></i>Layer Display Options</div>
      <div class="plab p1">Presets (Ctrl+Tab):</div>
      <div class="sel psel">All Layers</div>
      <div class="plab p2">Viewports (Shift+Tab):</div>
      <div class="sel psel p3">---</div>
      <div class="pstripe"></div>
      <div class="phead sf">Selection Filter<i class="reddot"></i></div>
      <div class="filter">
        <label><span class="cb on"></span>All items</label><label><span class="cb"></span>Locked items</label>
        <label><span class="cb on"></span>Footprints</label><label><span class="cb on"></span>Text</label>
        <label><span class="cb on"></span>Tracks</label><label><span class="cb on"></span>Vias</label>
        <label><span class="cb on"></span>Pads</label><label><span class="cb on"></span>Graphics</label>
        <label><span class="cb on"></span>Zones</label><label><span class="cb on"></span>Rule Areas</label>
        <label><span class="cb on"></span>Dimensions</label><label><span class="cb on"></span>Other items</label>
      </div>
    </aside>
  </div>

  <div class="msgbar">
    <div><span>Pads</span><span>0</span></div>
    <div><span>Vias</span><span>0</span></div>
    <div><span>Track Segments</span><span>0</span></div>
    <div><span>Nets</span><span>0</span></div>
    <div><span>Unrouted</span><span>0</span></div>
  </div>
  <div class="status">
    <span></span><span>Z 1.03</span><span>X 21.0000  Y -4.0000</span><span>dx 21.0000  dy -4.0000  dist 21.3776</span><span>grid 0.5000</span><span>mm</span><span></span><span></span>
  </div>
  <footer class="taskbar">
    <svg class="t-wid" viewBox="0 0 30 32"><rect x="0" y="0" width="30" height="32" rx="2" fill="#1c63ad"/><rect x="3" y="3" width="10" height="26" fill="#fff"/><rect x="16" y="3" width="11" height="12" fill="#5ed0fa"/><rect x="16" y="17" width="11" height="5" fill="#2a9be0"/><rect x="16" y="24" width="11" height="5" fill="#2a9be0"/></svg>
    <svg class="t-start" viewBox="0 0 30 30"><path fill="#3aa8ee" d="M0 0h14v14H0z"/><path fill="#5cc4f7" d="M16 0h14v14H16z"/><path fill="#1e88d8" d="M0 16h14v14H0z"/><path fill="#2a9fe8" d="M16 16h14v14H16z"/></svg>
    <div class="search"><svg viewBox="0 0 18 20"><circle cx="8" cy="8" r="6.500" fill="none" stroke="#222" stroke-width="1.700"/><path d="M12 13l5 6" stroke="#222" stroke-width="1.900"/></svg><span>Search</span></div>
    <div class="apps">
      <span class="app-i"><svg viewBox="0 0 32 32"><path fill="#3aa0f0" d="M3 14C3 6 9 2 13 2h3c-5 2-7 7-7 13v8c0 3-3 7-6 3z"/><path fill="#f6b44a" d="M22 1c4 0 7 5 7 11v7c0 7-5 12-10 12h-3c4-2 6-6 6-13z"/><path fill="#c45bd0" d="M12 9c2-5 7-7 10-6-3 2-4 6-4 13l-6 3z"/><path fill="#ea6a8a" d="M9 25c3 1 8-1 10-8l5-1c-1 7-5 14-10 14-3 0-5-2-5-5z"/></svg></span>
      <span class="app-i"><svg viewBox="0 0 32 32"><path fill="#1478c8" d="M16 1C7 1 1 8 1 16c0 9 7 15 15 15 5 0 9-2 12-6-3 1-9 1-12-2-4-3-3-9 3-10 4 0 6 2 6 5-1 0 5 0 6-3C31 7 25 1 16 1z"/><path fill="#4ed0a0" d="M4 8c3-5 9-7 14-6s11 6 12 12c-1-5-7-9-13-8S6 9 4 13z"/></svg></span>
      <span class="app-i dot"><svg viewBox="0 0 32 32"><path fill="#d8a832" d="M1 3h12l3 4H1z"/><path fill="#ffd54d" d="M1 7h30v25H1z"/><path fill="#1e88d8" d="M8 20h16v4H8z"/></svg></span>
      <span class="app-i dot"><svg viewBox="0 0 32 32"><path fill="none" stroke="#3aa8ee" stroke-width="2" d="M10 7V3h12v4"/><path fill="#1f4e8c" d="M2 7h28v22a3 3 0 0 1-3 3H5a3 3 0 0 1-3-3z"/><path fill="#f25022" d="M10 13h5v5h-5z"/><path fill="#7fba00" d="M17 13h5v5h-5z"/><path fill="#00a4ef" d="M10 20h5v5h-5z"/><path fill="#ffb900" d="M17 20h5v5h-5z"/></svg></span>
      <span class="app-i dot"><svg viewBox="0 0 32 32"><circle cx="16" cy="16" r="15" fill="#fff" stroke="#222" stroke-width="1.800"/><text x="16" y="19.500" class="svgb" font-size="9" text-anchor="middle" fill="#222">DELL</text></svg></span>
      <span class="app-i dot"><svg viewBox="0 0 32 32"><circle cx="16" cy="16" r="15" fill="#34a853"/><path fill="#ea4335" d="M3 9a15 15 0 0 1 26 0H16a7 7 0 0 0-7 4z"/><path fill="#fbbc05" d="M29 9a15 15 0 0 1-14 22l7-12a7 7 0 0 0-1-10z"/><circle cx="16" cy="16" r="6.500" fill="#4285f4" stroke="#fff" stroke-width="2"/><path fill="#8a6f8f" d="M18 0h10a4 4 0 0 1 4 4v11H18z"/><path fill="#3c4a4a" d="M18 9h14v6H18z"/></svg></span>
      <span class="app-i"><svg viewBox="0 0 32 32"><rect x="2" y="1" width="28" height="30" rx="1" fill="#f5f1e2"/><circle cx="11" cy="10" r="6" fill="#ef7d3c"/><circle cx="21" cy="21" r="7" fill="#f4c542"/><path d="M18 5l6 6M8 24l6-6" stroke="#6aa84f" stroke-width="2"/></svg></span>
      <span class="app-i"><svg viewBox="0 0 32 32"><circle cx="16" cy="16" r="15.500" fill="#2ca01c"/><path fill="none" stroke="#fff" stroke-width="2.800" d="M14 8v17M13 10h-2a5.500 5.500 0 0 0 0 11h2M18 24V7M19 11h2a5.500 5.500 0 0 1 0 11h-2"/></svg></span>
      <span class="app-i"><svg viewBox="0 0 32 32"><rect x="1" y="4" width="30" height="24" rx="3" fill="#6d93c7"/><path d="M2 1v3M7 1v3M12 1v3M17 1v3M22 1v3M27 1v3M2 28v3M7 28v3M12 28v3M17 28v3M22 28v3M27 28v3" stroke="#8aa8d0" stroke-width="2"/><path d="M8 12h14l-12 9h14" fill="none" stroke="#fff" stroke-width="2.500"/></svg></span>
      <span class="app-i dot"><svg viewBox="0 0 32 32"><rect x="2" y="1" width="28" height="30" rx="1.500" fill="#2b2b2b"/><path fill="#f6c900" d="M30 12v19H17z"/></svg></span>
      <span class="app-i dot"><svg viewBox="0 0 32 32"><rect x="13" y="4" width="18" height="24" fill="#fff" stroke="#2b579a" stroke-width="1.500"/><path d="M18 10h10M18 15h10M18 20h10" stroke="#2b579a" stroke-width="2"/><path fill="#2b579a" d="M1 3l17-3v32L1 29z"/><text x="9" y="21" class="svgb" font-size="13" text-anchor="middle" fill="#fff">W</text></svg></span>
      <span class="app-i dot"><svg viewBox="0 0 32 32"><rect x="13" y="4" width="18" height="24" fill="#fff" stroke="#217346" stroke-width="1.500"/><path d="M18 10h10M18 15h10M18 20h10M22 5v22" stroke="#217346" stroke-width="2"/><path fill="#217346" d="M1 3l17-3v32L1 29z"/><text x="9" y="21" class="svgb" font-size="13" text-anchor="middle" fill="#fff">X</text></svg></span>
      <span class="app-i dot"><svg viewBox="0 0 32 32"><rect x="4" y="3" width="24" height="26" fill="#2ab3d6"/><path d="M7 1v4M12 1v4M17 1v4M22 1v4" stroke="#1f6f8a" stroke-width="2"/><path d="M9 11h14M9 16h14M9 21h14" stroke="#0d4a60" stroke-width="2"/><path d="M4 29h24v3H4z" fill="#7a4a20"/></svg></span>
      <span class="app-i dot"><svg viewBox="0 0 32 32"><rect x="13" y="4" width="18" height="24" fill="#fff" stroke="#d04423" stroke-width="1.500"/><path d="M19 20h9M19 24h9" stroke="#d04423" stroke-width="2"/><path fill="#d04423" d="M1 3l17-3v32L1 29z"/><text x="9" y="21" class="svgb" font-size="13" text-anchor="middle" fill="#fff">P</text></svg></span>
      <span class="app-i dot"><svg viewBox="0 0 32 32"><path fill="#0e7ac4" d="M22 0l9 4v24l-9 4-14-13-6 5-2-2v-12l2-2 6 5zm1 9l-8 7 8 7z"/><path fill="#34a8ee" d="M22 0l9 4v24l-9 4z"/></svg></span>
      <span class="app-i dot"><svg viewBox="0 0 32 32"><rect x="1" y="1" width="30" height="30" rx="3" fill="#1e9ae0"/><path d="M1 28l12-17 8 11 4-4 6 8v2a3 3 0 0 1-3 3H4a3 3 0 0 1-3-3z" fill="#e23c9a" opacity=".9"/><circle cx="23" cy="9" r="3" fill="#b3ecff"/></svg></span>
      <span class="app-i active"><svg viewBox="0 0 32 32"><rect x="1" y="0" width="30" height="32" rx="4" fill="#2030b8"/><text x="16" y="24" class="svgb" font-size="20" text-anchor="middle" fill="#fff">Ki</text></svg></span>
    </div>
    <div class="tray">
      <svg class="chev" viewBox="0 0 14 10"><path d="M1 8l6-6 6 6" fill="none" stroke="#222" stroke-width="1.700"/></svg>
      <svg class="wifi" viewBox="0 0 22 20"><path d="M1 7c5-6 15-6 20 0M4 10.500c4-4 10-4 14 0M7 14c2-2 6-2 8 0" fill="none" stroke="#222" stroke-width="1.500"/><circle cx="11" cy="17" r="1.700" fill="#222"/></svg>
      <svg class="vol" viewBox="0 0 22 20"><path d="M2 7h4l5-5v16l-5-5H2z" fill="none" stroke="#222" stroke-width="1.400"/><path d="M14 6c2 3 2 5 0 8" fill="none" stroke="#222" stroke-width="1.300"/><path d="M17 3c3 4 3 10 0 14" fill="none" stroke="#aaa" stroke-width="1.200"/></svg>
      <svg class="batt" viewBox="0 0 24 20"><rect x="2" y="4" width="18" height="13" rx="2" fill="#222"/><rect x="20" y="8" width="3" height="5" fill="#222"/><path d="M8 0L5 8h4l-2 6 7-8H9l2-6z" fill="#222" stroke="#dde8f7" stroke-width="1"/></svg>
      <div class="clock"><span>3:28 AM</span><span>6/19/2025</span></div>
    </div>
  </footer>
</div>
</body>
</html>
```
FILE: styles.css
```css
*{box-sizing:border-box}
html,body{margin:0;padding:0;width:1918px;height:1078px;overflow:hidden}
body{font-family:"Noto Sans","Open Sans",sans-serif;font-size:14px;color:#333;background:#f0f0f0}
.sprite{position:absolute;width:0;height:0}
.svgb{font-family:"Liberation Sans",sans-serif;font-weight:700}
.svgs{font-family:"DejaVu Sans",sans-serif}
i{display:block;font-style:normal}
.app{display:flex;flex-direction:column;width:1918px;height:1078px}

.titlebar{height:28px;flex:none;display:flex;align-items:center;background:#f0f0f0;padding-left:2px}
.appicon{width:20px;height:21px}
.apptitle{margin-left:6px;font-size:14.400px;color:#7a7a7a}
.winctl{margin-left:auto;display:flex;gap:46px;margin-right:25px}
.wc{width:12px;height:12px}

.menubar{height:24px;flex:none;background:#fff;padding:1px 0 0 9px;display:grid;grid-template-columns:41px 44px 50px 54px 56px 65px 54px 93px auto;align-items:center;color:#5c5c5c}

.tool1{height:53px;flex:none;display:flex;padding:8px 0 0 5px;background:#efefef}
.tb{width:41.2px;height:33px;display:flex;justify-content:center;align-items:center;flex:none}
.tb svg{width:31px;height:31px}
.hsep{width:1px;height:34px;background:#8f8f8f;margin:0 4.500px 0 3.200px;flex:none}

.tool2{height:37px;flex:none;display:flex;align-items:flex-start;padding:2px 0 0 7px;background:#efefef}
.sel{height:26px;background:#fff;border:1px solid #d9d9d9;border-bottom-color:#ababab;border-radius:3px;display:flex;align-items:center;padding:0 0 1px 2px;position:relative;flex:none;color:#222}
.sel::after{content:"";position:absolute;right:10px;top:8px;width:6px;height:6px;border-right:1px solid #555;border-bottom:1px solid #555;transform:rotate(45deg)}
.w-track{width:192px}
.w-via{width:184px}
.w-layer{width:158px;padding-left:7px}
.w-grid{width:208px}
.w-zoom{width:118px}
.posture{width:38px;height:38px;margin:-4px 0 0 3px;background:#b6d7f5;border:1px solid #1a78c2;display:flex;justify-content:center;align-items:center;flex:none}
.posture svg{width:32px;height:32px}
.hsep2{width:1px;height:34px;background:#8f8f8f;margin:-1px 6px 0;flex:none}
.after-pair{margin-left:9px}
.swatch-red{width:15px;height:15px;background:#c83232;border:1px solid #444;margin-right:6px;display:block}
.pair{width:30px;height:30px;margin:-1px 0 0 8px;flex:none}

.main{height:809px;flex:none;display:flex}
.vt{flex:none;display:flex;flex-direction:column;background:#f0f0f0}
.vl{width:44px;padding-top:4.500px}
.vr{width:45px;padding-top:4.500px;padding-left:4px}
.vb{height:41px;width:38px;display:flex;justify-content:center;align-items:center;flex:none;position:relative}
.vl .vb{height:41.3px;margin-left:3px}
.vb svg{width:32px;height:32px}
.vb.on::before{content:"";position:absolute;inset:1.500px 0;background:#b6d7f5;border:1px solid #1a78c2}
.vb svg{position:relative}
.vb.more::after{content:"";position:absolute;right:-1px;bottom:1px;border-style:solid;border-width:0 0 9px 9px;border-color:transparent transparent #000 transparent}
.vsep{height:1px;margin:3.500px 0 4.500px;background:#9a9a9a;flex:none}
.vl .vsep{margin:3.500px 6px 3.500px 5px}
.vr .vsep{margin:4px 1px}

.canvas{width:1286px;flex:none;position:relative;background-color:#001023;background-image:radial-gradient(circle at center,#6f7a88 0,#6f7a88 .5px,transparent 1px);background-size:18.55px 18.55px;background-position:-7.3px 7.700px}
.sheet{position:absolute;left:0;top:0;width:1286px;height:809px}
.tabline{stroke:#8a8f96;fill:none;stroke-width:1}
.outer{fill:none;stroke:#6d7885;stroke-width:1.400}
.corner rect{fill:#6d7885}
.frame{fill:none;stroke:#86648c;stroke-width:1.200}
.ticks{fill:none;stroke:#86648c;stroke-width:5;stroke-dasharray:1 17.500}
.numbers text{fill:#86648c;font-family:"Liberation Sans",sans-serif;font-size:8px}

.dialog{position:absolute;left:103px;top:43px;width:1082px;height:701px;background:#f0f0f0;border-radius:8px;box-shadow:0 3px 12px rgba(0,0,0,.35);padding:0 10px;font-size:14px;color:#2c2c2c}
.dlg-title{height:37px;display:flex;align-items:center;justify-content:space-between;margin-bottom:11px;padding-right:5px}
.dlg-x{width:14px;height:14px}
.fmt-row{display:flex;height:26px;align-items:center;margin-bottom:26px}
.lab{flex:none;padding-bottom:2px}
.w-plotfmt{width:85px}
.w-gerber{width:94px}
.w-outdir{width:119px;margin-left:34px}
.txt-input{width:668px;height:26px;background:#fff;border-bottom:1px solid #777;border-radius:3px 3px 0 0;flex:none}
.ibtn{width:25px;height:25px;display:flex;justify-content:center;align-items:center;background:#fbfbfb;border:1px solid #d4d4d4;border-bottom-color:#b5b5b5;border-radius:4px;flex:none;margin-left:8px}
.ibtn.first{margin-left:3px}
.ibtn svg{width:15px;height:15px}

.cols{display:flex;gap:11px;height:402px;margin-bottom:21px}
.group{border:1px solid #dcdcdc;border-radius:2px;position:relative;flex:none}
.legend{position:absolute;left:8px;top:-10px;background:#f0f0f0;padding:0 1px 0 0;line-height:19px;color:#333}
.g-inc{width:190px;height:402px;padding:15px 0 0 8px}
.g-all{width:191px;height:402px;padding:15px 0 0 8px}
.g-all .legend{left:8px}
.list{border:1px solid #8a8a8a;background:#fff;overflow:hidden;display:flex;padding:1px}
.l-inc{width:173px;height:378px}
.l-all{width:172px;height:344px}
.rows{width:148px;flex:none}
.row{height:22px;display:flex;align-items:center;gap:4px;padding-left:1px;color:#333;white-space:nowrap}
.sel-row{background:#0078d7;color:#fff}
.focus{outline:1px dotted #00306a;outline-offset:-1px}
.thumb{width:6px;margin:21px 0 0 8px;background:#8a8a8a;flex:none}
.t-inc{height:235px}
.t-all{height:186px}
.updown{display:flex;gap:4px;margin:7px 0 0 2px}
.updown .ibtn{width:26px;margin:0}

.cb{width:16px;height:16px;border:1px solid #6f6f6f;border-radius:3px;background:#fdfdfd;flex:none;position:relative;display:block}
.cb.on{background:#0067c0;border-color:#0067c0}
.cb.on::after{content:"";position:absolute;left:4.700px;top:2px;width:4.500px;height:8px;border-right:1.300px solid #fff;border-bottom:1.300px solid #fff;transform:rotate(42deg)}
.cb.dim{background:#0b6fc9;border-color:#0b6fc9}
.cb.dim::after{border-color:#7fb7ea}
.cb.pale{background:#6aa9e6;border-color:#6aa9e6}
.cb.dis{border-color:#c9c9c9;background:#f3f3f3}
.rb{width:16px;height:16px;border:1px solid #6f6f6f;border-radius:50%;background:#fdfdfd;flex:none;display:block}
.rb.on{border:4.500px solid #0067c0;background:#fff}
.opt{display:flex;align-items:center;gap:4px;height:26px;white-space:nowrap;flex:none}
.off{color:#999}
.ind{margin-left:25px}
.g1{margin-top:1px}
.g5{margin-top:5px}
.g6{margin-top:6px}
.g9{margin-top:9px}

.rightcol{width:659px;flex:none;display:flex;flex-direction:column;gap:22px}
.g-gen{height:236px;display:flex}
.g-ger{height:144px;display:flex}
.gen-left{width:311px;flex:none;padding:13px 0 0 9px;display:flex;flex-direction:column}
.gen-right{padding:12px 0 0 9.500px;display:flex;flex-direction:column}
.ger-right{padding:13px 0 0 8.500px;display:flex;flex-direction:column}
.lsel{display:flex;align-items:center;height:26px;flex:none}
.w-dm{width:80px;padding-left:1px}
.w-dis{width:154px}
.sel.dis{background:#f6f6f6;border-color:#f3f3f3;color:#9a9a9a}
.sel.dis::after{border-color:#bbb}
.w-cf{width:132px}
.w-cfs{width:191px}

.g-out{width:1062px;height:138px;padding:17px 10px 0}
.msgbox{height:78px;background:#fff}
.showrow{display:flex;align-items:center;height:25px;margin:7px 0 0 -3px}
.showrow label{display:flex;align-items:center;gap:5px;flex:none}
.c-show{width:47px;flex:none;padding-bottom:2px}
.c-all{width:87px}
.c-err{width:72px}
.c-bdg1{width:57px;flex:none}
.c-war{width:96px}
.c-bdg2{width:58px;flex:none}
.c-act{width:118px}
.c-inf{width:417px}
.badge{display:flex;width:22px;height:19px;border-radius:50%;background:#0a8413;color:#fff;font-weight:700;font-size:13px;line-height:18px;justify-content:center;align-items:center}
.btn{font:inherit;color:#2c2c2c;height:25px;background:#fdfdfd;border:1px solid #d6d6d6;border-bottom-color:#b0b0b0;border-radius:4px;padding:0;flex:none}
.b-save{width:90px}
.btnrow{display:flex;gap:12px;margin:8px 0 0 6px}
.btnrow .btn{height:26px}
.b-drc{width:93px;margin-right:auto}
.b-plot{width:89px;border-color:#0067c0}
.b-close{width:89px}
.b-drill{width:160px}
.grip{position:absolute;right:0;bottom:0;width:10px;height:10px}

.panel{width:543px;flex:none;background:#f0f0f0;border-left:5px solid #e2e2e2;display:flex;flex-direction:column;overflow:hidden;font-size:12.800px;color:#333}
.phead{height:26px;flex:none;background:#b8b8b8;display:flex;align-items:center;padding:0 0 2px 4px;font-size:14.500px;color:#333;position:relative}
.tabs{display:flex;height:26px;margin:6px 0 0 1px;border-bottom:1px solid #e0e0e0;flex:none;font-size:14px}
.tab{display:flex;align-items:center;padding-left:5px;width:60px;height:25px;border:1px solid #ebebeb;border-bottom:0;border-left:0;flex:none}
.tab:nth-child(3){width:58px;padding-left:7px}
.tab.active{width:62px;padding:0 0 3px 8px;background:#f4f4f4;border:0}
.layerwrap{display:flex;height:443px;flex:none;padding:3px 0 0 4px}
.layers{width:511px;flex:none}
.lr{height:20px;display:flex;align-items:center;white-space:nowrap}
.lr.cur{background:#e0e0e0}
.lr i{width:19px;flex:none}
.lr i.arrow{width:0;height:0;border-style:solid;border-width:5.500px 0 5.500px 6px;border-color:transparent transparent transparent #3d3dff;margin:-2px 6px 0 7px;box-sizing:border-box;flex:none}
.sw{width:16px;height:15px;display:block;flex:none}
.eye{width:16px;height:16px;margin:0 5px 0 6px;flex:none}
.c-fcu{background:#c83232}.c-bcu{background:#4d7fc4}.c-fad{background:#840084}.c-bad{background:#000084}
.c-fpa{background:#a0918a}.c-bpa{background:#0cadad}.c-fsi{background:#f2eda1}.c-bsi{background:#e8b2a7}
.c-fma{background:repeating-conic-gradient(#55307c 0 25%,#43245f 0 50%) 0 0/8px 8px}
.c-bma{background:repeating-conic-gradient(#0a6f60 0 25%,#075a4e 0 50%) 0 0/8px 8px}
.c-udr{background:#c2c2c2}.c-uco{background:#5a90dc}.c-ue1{background:#b4dbd2}.c-ue2{background:#d8c850}
.c-edg{background:#d0d2cd}.c-mar{background:#ff26e2}.c-bcy{background:#26e9ff}.c-ffa{background:#afafaf}.c-bfa{background:#585d84}
.pthumb{width:5px;height:358px;margin:20px 0 0 8px;background:#8a8a8a;flex:none}
.ldo{height:27px;margin:0 2px 2px 9px;background:#fafafa;display:flex;align-items:center;color:#7a7a7a;flex:none;padding-left:8px;gap:3px}
.ldo-arrow{width:0;height:0;border-style:solid;border-width:5px 0 5px 5px;border-color:transparent transparent transparent #555}
.plab{height:18px;line-height:18px;padding-left:7px;flex:none;color:#444}
.p1{margin-top:13px}
.p2{margin-top:6px}
.psel{width:525px;margin:3px 0 0 7px;font-size:14.500px}
.p3{margin-top:2px}
.pstripe{height:6px;margin-top:6px;background:#e2e2e2;flex:none}
.reddot{position:absolute;left:440px;top:24px;width:4px;height:4px;border-radius:50%;background:#e01010}
.filter{display:grid;grid-template-columns:105px auto;margin:5px 0 0 5px;justify-content:start}
.filter label{height:20px;display:flex;align-items:center;gap:3px;white-space:nowrap}

.msgbar{height:41px;flex:none;display:grid;grid-template-columns:69.500px 65px 142px 68px auto;padding:3px 0 0 13.500px;background:#f0f0f0;border-bottom:1px solid #d8d8d8;color:#777;font-size:14px}
.msgbar div{display:flex;flex-direction:column;gap:1px}
.msgbar span{line-height:19px}
.status{height:28px;flex:none;display:grid;grid-template-columns:584px 97.500px 203.500px 320.500px 234px 77px 215px auto;background:#f0f0f0;border-bottom:1px solid #cfcfcf;color:#3a3a3a;font-size:14px}
.status span{border-left:1px solid #d8d8d8;padding-left:4px;white-space:pre;line-height:29px}
.status span:first-child{border-left:0}

.taskbar{flex:1;display:flex;align-items:center;position:relative;background:linear-gradient(90deg,#dfeaf9 0,#d8e4f7 40%,#d4e2f6 70%,#dde7f6 100%)}
.t-wid{width:30px;height:32px;margin:1px 0 0 26px;flex:none}
.t-start{width:30px;height:30px;margin:1px 0 0 281px;flex:none}
.search{width:272px;height:38px;margin-left:17px;background:#fbfcfe;border-radius:19px;display:flex;align-items:center;padding-left:14px;color:#666;font-size:16px;box-shadow:0 1px 2px rgba(0,0,0,.15);flex:none}
.search svg{width:18px;height:20px;margin-right:13px}
.apps{display:flex;margin-left:4px;flex:none;height:58px}
.app-i{width:55px;height:58px;display:flex;justify-content:center;align-items:center;position:relative;flex:none;padding-top:1px}
.app-i svg{width:29px;height:30px}
.app-i.dot::after{content:"";position:absolute;left:25px;bottom:4px;width:5px;height:5px;border-radius:50%;background:#7c8796}
.app-i.active{width:45px;height:47px;margin:6px 0 0 5px;background:#f4f7fc;border-radius:4px}
.app-i.active::after{content:"";position:absolute;left:15px;bottom:0;width:20px;height:4px;border-radius:2px;background:#0078d4}
.app-i.active svg{margin-top:-6px}
.tray{position:absolute;right:0;top:0;height:58px;display:flex;align-items:center;flex:none}
.chev{width:14px;height:10px;margin-right:24px}
.wifi{width:22px;height:20px;margin-right:7px}
.vol{width:22px;height:20px;margin-right:8px}
.batt{width:24px;height:20px;margin-right:14px}
.clock{display:flex;flex-direction:column;align-items:flex-end;width:96px;padding-right:23px;font-size:13.500px;color:#222;line-height:21px;white-space:nowrap}
```
